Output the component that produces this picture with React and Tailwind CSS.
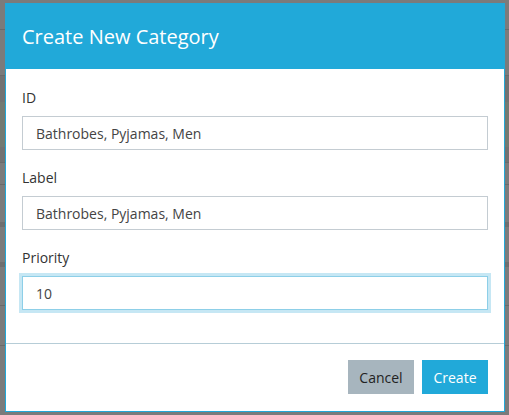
import React from 'react';

const rows = [
  { h: 'h-[30px]', cls: 'border-b border-[#6a6a6a]' },
  { h: 'h-[46px]', cls: 'border-b border-[#6a6a6a]' },
  { h: 'h-[26px]', cls: 'bg-[#727272]' },
  { h: 'h-[45px]', cls: 'bg-[#737a72]' },
  { h: 'h-[16px]', cls: 'bg-[#727272] border-b border-[#6a6a6a]' },
  { h: 'h-[22px]', cls: 'border-b border-[#6a6a6a]' },
  { h: 'h-[42px]', cls: 'border-b-[5px] border-[#6e6e6e]' },
  { h: 'h-[40px]', cls: 'border-b-[5px] border-[#6e6e6e]' },
  { h: 'h-[39px]', cls: 'border-b border-[#6a6a6a]' },
  { h: 'h-[40px]', cls: 'border-b border-[#6a6a6a]' },
];

const Field = ({ label, value, focused }) => (
  <div className="mb-[18px] last:mb-0">
    <label className="block h-5 leading-5 mb-2 text-[14px] text-[#333]">{label}</label>
    <input
      readOnly
      value={value}
      className={`block w-full h-[34px] px-[13px] text-[14px] text-[#444] bg-white outline-none border ${
        focused ? 'border-[#8dcfe8] ring-[3px] ring-[#c6e7f4]' : 'border-[#c4ccd2]'
      }`}
    />
  </div>
);

const App = () => {
  return (
    <div
      className="relative w-[509px] h-[415px] overflow-hidden bg-[#7b7b7b]"
      style={{ fontFamily: '"Open Sans", "Noto Sans", sans-serif' }}
    >
      {/* page underneath the overlay */}
      <div className="flex flex-col">
        {rows.map((r, i) => (
          <div key={i} className={`${r.h} ${r.cls}`} />
        ))}
      </div>

      {/* modal */}
      <div className="absolute left-[5px] top-[3px] w-[500px] border border-[#22a8d8] bg-white">
        <div className="h-[65px] bg-[#21a9d9] px-4 flex items-center">
          <h3 className="text-[20px] text-white leading-none">Create New Category</h3>
        </div>

        <div className="px-4 pt-[19px] pb-[33px]">
          <Field label="ID" value="Bathrobes, Pyjamas, Men" />
          <Field label="Label" value="Bathrobes, Pyjamas, Men" />
          <Field label="Priority" value="10" focused />
        </div>

        <div className="border-t border-[#b6cdd7] px-4 pt-4 pb-[17px] flex justify-end gap-2">
          <button className="w-[66px] h-[34px] bg-[#a7b5be] text-[14px] text-[#222]">Cancel</button>
          <button className="w-[66px] h-[34px] bg-[#21a9d9] text-[14px] text-white">Create</button>
        </div>
      </div>
    </div>
  );
};

export default App;
